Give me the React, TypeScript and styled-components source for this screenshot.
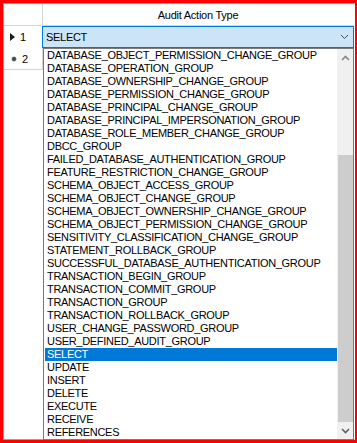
import { FC } from "react";
import styled, { createGlobalStyle } from "styled-components";

const options = [
  "DATABASE_OBJECT_PERMISSION_CHANGE_GROUP",
  "DATABASE_OPERATION_GROUP",
  "DATABASE_OWNERSHIP_CHANGE_GROUP",
  "DATABASE_PERMISSION_CHANGE_GROUP",
  "DATABASE_PRINCIPAL_CHANGE_GROUP",
  "DATABASE_PRINCIPAL_IMPERSONATION_GROUP",
  "DATABASE_ROLE_MEMBER_CHANGE_GROUP",
  "DBCC_GROUP",
  "FAILED_DATABASE_AUTHENTICATION_GROUP",
  "FEATURE_RESTRICTION_CHANGE_GROUP",
  "SCHEMA_OBJECT_ACCESS_GROUP",
  "SCHEMA_OBJECT_CHANGE_GROUP",
  "SCHEMA_OBJECT_OWNERSHIP_CHANGE_GROUP",
  "SCHEMA_OBJECT_PERMISSION_CHANGE_GROUP",
  "SENSITIVITY_CLASSIFICATION_CHANGE_GROUP",
  "STATEMENT_ROLLBACK_GROUP",
  "SUCCESSFUL_DATABASE_AUTHENTICATION_GROUP",
  "TRANSACTION_BEGIN_GROUP",
  "TRANSACTION_COMMIT_GROUP",
  "TRANSACTION_GROUP",
  "TRANSACTION_ROLLBACK_GROUP",
  "USER_CHANGE_PASSWORD_GROUP",
  "USER_DEFINED_AUDIT_GROUP",
  "SELECT",
  "UPDATE",
  "INSERT",
  "DELETE",
  "EXECUTE",
  "RECEIVE",
  "REFERENCES",
];

const selected = "SELECT";

const Chevron: FC<{ up?: boolean; color?: string; width?: number }> = ({ up, color = "#606060", width = 1.6 }) => (
  <svg width="9" height="6" viewBox="0 0 9 6">
    <polyline
      points={up ? "1,5 4.5,1.5 8,5" : "1,1 4.5,4.5 8,1"}
      fill="none"
      stroke={color}
      strokeWidth={width}
    />
  </svg>
);

export default function App() {
  return (
    <>
      <GlobalStyle />
      <SFrame>
        <SGrid>
          <SRow>
            <SRowHead $header />
            <SHeaderCell>Audit Action Type</SHeaderCell>
          </SRow>
          <SRow>
            <SRowHead>
              <SArrow />
              <span>1</span>
            </SRowHead>
            <SCell>
              <SCombo>
                <span>{selected}</span>
                <Chevron color="#4a4a4a" width={1} />
              </SCombo>
            </SCell>
          </SRow>
          <SRow>
            <SRowHead>
              <SNewDot />
              <span>2</span>
            </SRowHead>
            <SCell />
          </SRow>

          <SDropList>
            <SItems>
              {options.map((o) => (
                <SItem key={o} $active={o === selected}>{o}</SItem>
              ))}
            </SItems>
            <SScrollBar>
              <SScrollBtn><Chevron up color="#868686" /></SScrollBtn>
              <STrack>
                <SThumb />
              </STrack>
              <SScrollBtn><Chevron color="#606060" /></SScrollBtn>
            </SScrollBar>
          </SDropList>
        </SGrid>
      </SFrame>
    </>
  );
}

const GlobalStyle = createGlobalStyle`
  html, body {
    margin: 0;
    padding: 0;
    background: #ffffff;
  }
  body {
    font-family: "Liberation Sans", Arial, sans-serif;
    font-size: 11px;
    color: #000000;
  }
`;

const SFrame = styled.div`
  width: 357px;
  height: 443px;
  box-sizing: border-box;
  border-style: solid;
  border-color: #ff0000;
  border-width: 3px 2px 3px 3px;
  background: #ffffff;
`;

const SGrid = styled.div`
  position: relative;
  height: 100%;
  box-sizing: border-box;
  border: 1px solid #a0a0a0;
  border-right-color: #ffffff;
  background: #ffffff;
`;

const SRow = styled.div`
  display: grid;
  grid-template-columns: 39px 1fr;
  height: 22px;
`;

const SRowHead = styled.div<{ $header?: boolean }>`
  display: flex;
  align-items: center;
  gap: 5px;
  padding-left: 6px;
  border-right: 1px solid #d5d5d5;
  border-bottom: 1px solid #d5d5d5;
  background: #ffffff;
`;

const SHeaderCell = styled.div`
  display: flex;
  align-items: center;
  justify-content: center;
  border-bottom: 1px solid #d5d5d5;
  letter-spacing: -0.25px;
  padding-right: 1px;
`;

const SCell = styled.div`
  border-bottom: 1px solid #d5d5d5;
`;

const SArrow = styled.span`
  width: 0;
  height: 0;
  border-top: 4.5px solid transparent;
  border-bottom: 4.5px solid transparent;
  border-left: 5px solid #1a1a1a;
`;

const SNewDot = styled.span`
  width: 4px;
  height: 4px;
  margin-left: 2px;
  margin-right: 1px;
  border-radius: 50%;
  background: #4a4a4a;
  box-shadow: 0 0 0 0.5px #9a9a9a;
`;

const SCombo = styled.div`
  display: flex;
  align-items: center;
  justify-content: space-between;
  box-sizing: border-box;
  height: 22px;
  margin-left: -1px;
  padding: 0 4px 0 3px;
  border: 1px solid #0078d7;
  background: #cce4f7;
  letter-spacing: -0.3px;
`;

const SDropList = styled.div`
  position: absolute;
  left: 39px;
  top: 44px;
  right: 0;
  bottom: -1px;
  display: flex;
  border: 1px solid #7a7a7a;
  background: #ffffff;
`;

const SItems = styled.ul`
  flex: 1;
  margin: 0;
  padding: 0 0 0 1px;
  list-style: none;
  overflow: hidden;
`;

const SItem = styled.li<{ $active?: boolean }>`
  height: 13px;
  line-height: 13px;
  padding-left: 2px;
  white-space: nowrap;
  letter-spacing: -0.3px;
  color: ${(p) => (p.$active ? "#ffffff" : "#000000")};
  background: ${(p) => (p.$active ? "#0078d7" : "transparent")};
`;

const SScrollBar = styled.div`
  display: flex;
  flex-direction: column;
  width: 16px;
  background: #f0f0f0;
`;

const SScrollBtn = styled.div`
  display: flex;
  align-items: center;
  justify-content: center;
  height: 17px;
  flex: none;
`;

const STrack = styled.div`
  flex: 1;
  display: flex;
  flex-direction: column;
  padding: 89px 0 0 1px;
`;

const SThumb = styled.div`
  flex: 1;
  background: #cdcdcd;
`;
